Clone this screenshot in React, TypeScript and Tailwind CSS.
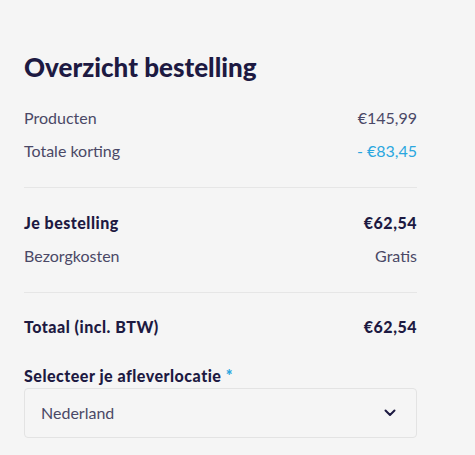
import React from "react";

// Regel in het overzicht
function Regel({
  label,
  waarde,
  vet = false,
  waardeKleur = "text-[#4a4866]",
}: {
  label: string;
  waarde: string;
  vet?: boolean;
  waardeKleur?: string;
}) {
  const vetKlasse = "font-black tracking-[0.5px] text-[#1d1a42]";
  return (
    <div className="flex h-[33px] items-center justify-between">
      <span className={vet ? vetKlasse : "text-[#4a4866]"}>{label}</span>
      <span className={vet ? vetKlasse : waardeKleur}>{waarde}</span>
    </div>
  );
}

export default function App() {
  return (
    <div
      className="min-h-[455px] w-full bg-[#f5f5f5] pl-6 pt-[51px]"
      style={{ fontFamily: "Lato, 'Open Sans', sans-serif" }}
    >
      <div className="w-[393px] text-[16px]">
        <h2 className="h-8 text-[26px] font-black leading-8 text-[#1d1a42]">
          Overzicht bestelling
        </h2>

        <div className="mt-[18px]">
          <Regel label="Producten" waarde="€145,99" />
          <Regel label="Totale korting" waarde="- €83,45" waardeKleur="text-[#2aa7df]" />
        </div>

        <div className="mt-5 h-px bg-[#e6e6e6]" />

        <div className="mt-[18px]">
          <Regel label="Je bestelling" waarde="€62,54" vet />
          <Regel label="Bezorgkosten" waarde="Gratis" />
        </div>

        <div className="mt-5 h-px bg-[#e6e6e6]" />

        <div className="mt-[17px]">
          <Regel label="Totaal (incl. BTW)" waarde="€62,54" vet />
        </div>

        <label className="mt-[21px] block h-6 font-black leading-6 tracking-[0.5px] text-[#1d1a42]">
          Selecteer je afleverlocatie <span className="text-[#2aa7df]">*</span>
        </label>

        <div className="flex h-[50px] items-center justify-between rounded border border-[#e3e3e3] bg-[#f5f5f5] pl-4 pr-5">
          <span className="text-[#4a4866]">Nederland</span>
          <svg width="12" height="8" viewBox="0 0 12 8" fill="none">
            <path d="M1.5 1.5L6 6L10.5 1.5" stroke="#1d1a42" strokeWidth="2" strokeLinecap="round" strokeLinejoin="round" />
          </svg>
        </div>
      </div>
    </div>
  );
}
